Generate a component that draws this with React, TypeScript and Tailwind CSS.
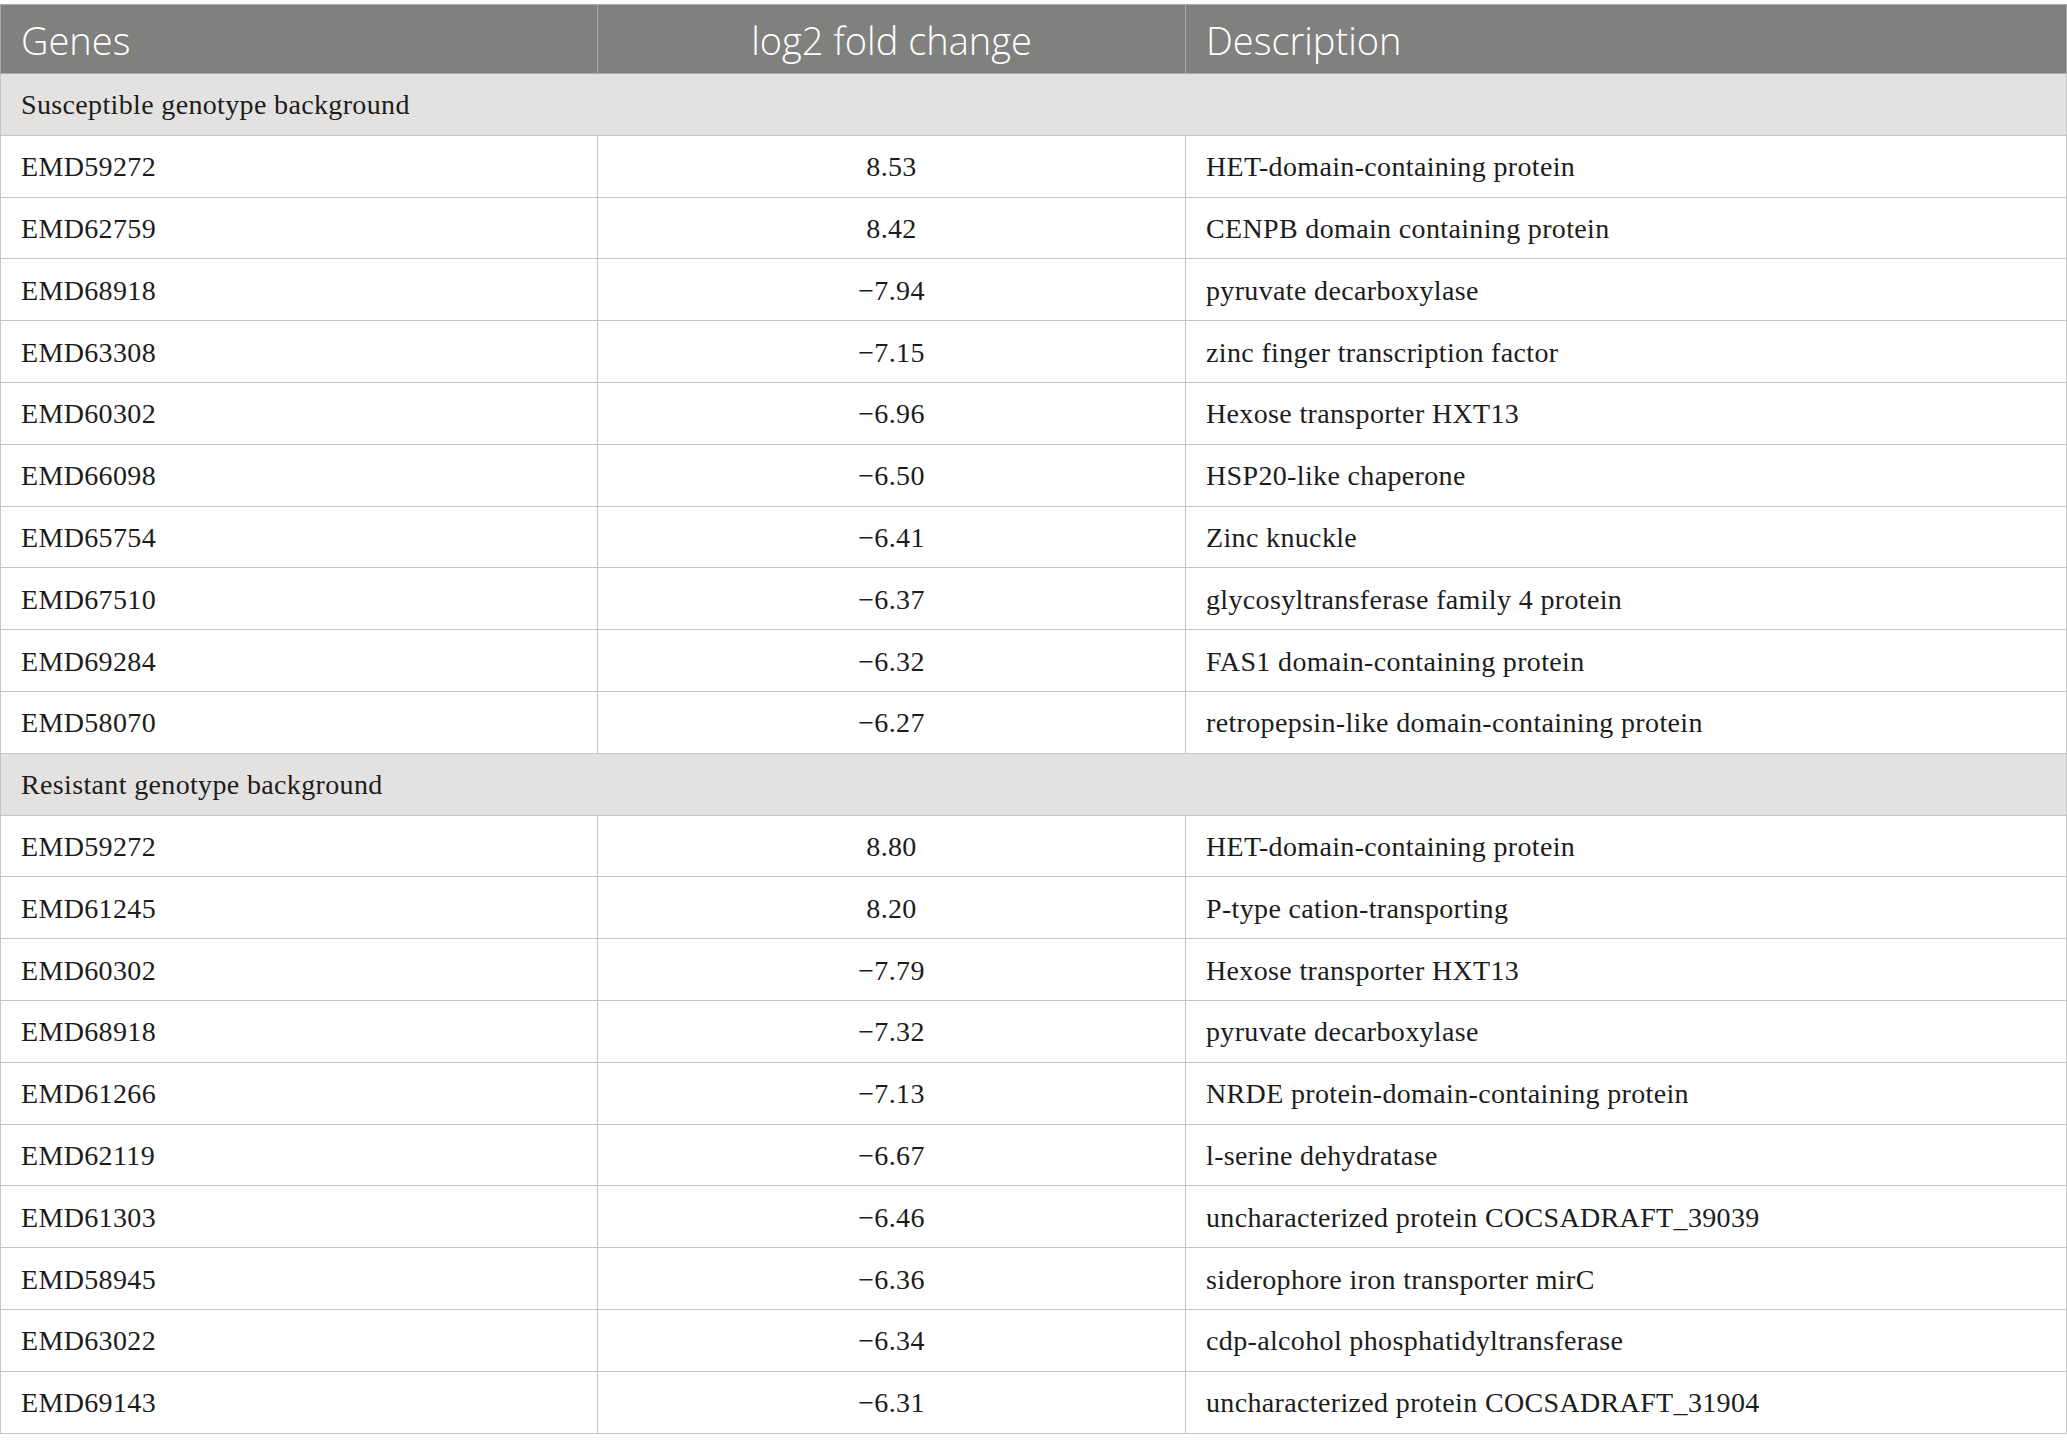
const susceptible = [
  ["EMD59272", "8.53", "HET-domain-containing protein"],
  ["EMD62759", "8.42", "CENPB domain containing protein"],
  ["EMD68918", "\u22127.94", "pyruvate decarboxylase"],
  ["EMD63308", "\u22127.15", "zinc finger transcription factor"],
  ["EMD60302", "\u22126.96", "Hexose transporter HXT13"],
  ["EMD66098", "\u22126.50", "HSP20-like chaperone"],
  ["EMD65754", "\u22126.41", "Zinc knuckle"],
  ["EMD67510", "\u22126.37", "glycosyltransferase family 4 protein"],
  ["EMD69284", "\u22126.32", "FAS1 domain-containing protein"],
  ["EMD58070", "\u22126.27", "retropepsin-like domain-containing protein"],
];

const resistant = [
  ["EMD59272", "8.80", "HET-domain-containing protein"],
  ["EMD61245", "8.20", "P-type cation-transporting"],
  ["EMD60302", "\u22127.79", "Hexose transporter HXT13"],
  ["EMD68918", "\u22127.32", "pyruvate decarboxylase"],
  ["EMD61266", "\u22127.13", "NRDE protein-domain-containing protein"],
  ["EMD62119", "\u22126.67", "l-serine dehydratase"],
  ["EMD61303", "\u22126.46", "uncharacterized protein COCSADRAFT_39039"],
  ["EMD58945", "\u22126.36", "siderophore iron transporter mirC"],
  ["EMD63022", "\u22126.34", "cdp-alcohol phosphatidyltransferase"],
  ["EMD69143", "\u22126.31", "uncharacterized protein COCSADRAFT_31904"],
];

const Section = ({ title, rows }: { title: string; rows: string[][] }) => (
  <>
    <tr className="h-[61.8px] bg-[#e3e2e0]">
      <td colSpan={3} className="border border-[#c6c6c6] px-[20px] pt-[2px] text-[28px] tracking-[0.35px] text-[#1c1c1c]">
        {title}
      </td>
    </tr>
    {rows.map(([gene, fc, desc], i) => (
      <tr key={i} className="h-[61.8px] bg-white text-[28px] tracking-[0.35px] text-[#1c1c1c]">
        <td className="border border-[#c6c6c6] px-[20px] pt-[2px]">{gene}</td>
        <td className="border border-[#c6c6c6] pt-[2px] text-center">{fc}</td>
        <td className="border border-[#c6c6c6] px-[20px] pt-[2px]">{desc}</td>
      </tr>
    ))}
  </>
);

const App = () => {
  return (
    <div className="min-h-screen bg-white pt-[4px]">
      <table className="w-[2067px] table-fixed border-collapse font-['Liberation_Serif',serif]">
        <colgroup>
          <col className="w-[597px]" />
          <col className="w-[588px]" />
          <col />
        </colgroup>
        {/* Header */}
        <thead>
          <tr className="h-[69px] bg-[#80817f] font-['Open_Sans',sans-serif] text-[38px] text-white">
            <th className="border border-[#a9a9a9] px-[20px] pt-[3px] text-left font-light">Genes</th>
            <th className="border border-[#a9a9a9] pt-[3px] text-center font-light">log2 fold change</th>
            <th className="border border-[#a9a9a9] px-[20px] pt-[3px] text-left font-light">Description</th>
          </tr>
        </thead>
        <tbody>
          <Section title="Susceptible genotype background" rows={susceptible} />
          <Section title="Resistant genotype background" rows={resistant} />
        </tbody>
      </table>
    </div>
  );
};

export default App;
